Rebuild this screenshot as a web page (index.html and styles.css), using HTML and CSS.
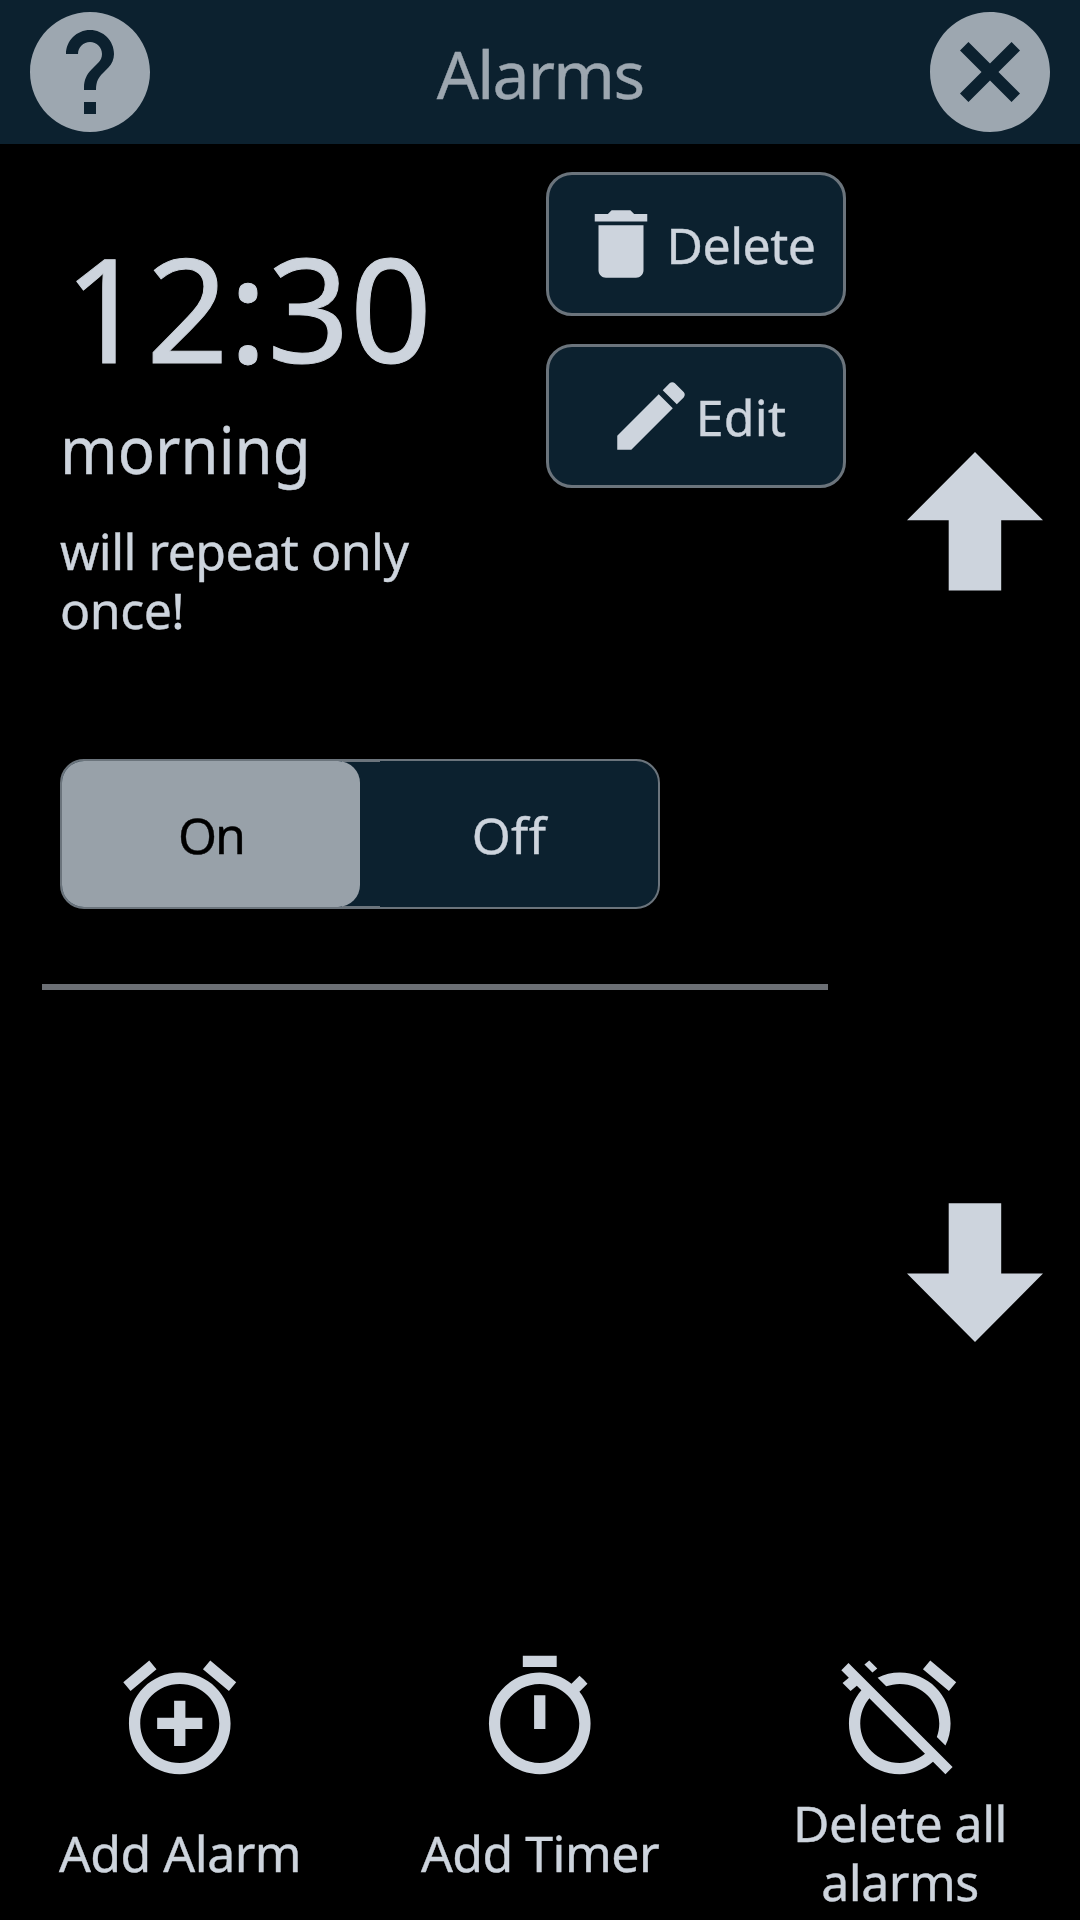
FILE: index.html
```html
<!DOCTYPE html>
<html lang="en">
<head>
<meta charset="utf-8">
<title>Alarms</title>
<link rel="stylesheet" href="styles.css">
</head>
<body>
<header class="header">
  <button class="round" aria-label="Help"><svg viewBox="0 0 24 24"><path d="M12 2C6.48 2 2 6.48 2 12s4.48 10 10 10 10-4.48 10-10S17.52 2 12 2zm1 17h-2v-2h2v2zm2.07-7.75l-.9.92C13.45 12.9 13 13.5 13 15h-2v-.5c0-1.1.45-2.1 1.17-2.83l1.24-1.26c.37-.36.59-.86.59-1.41 0-1.1-.9-2-2-2s-2 .9-2 2H8c0-2.21 1.79-4 4-4s4 1.79 4 4c0 .88-.36 1.68-.93 2.25z"/></svg></button>
  <h1 class="title">Alarms</h1>
  <button class="round" aria-label="Close"><svg viewBox="0 0 24 24"><path d="M12 2C6.47 2 2 6.47 2 12s4.47 10 10 10 10-4.47 10-10S17.53 2 12 2zm5 13.59L15.59 17 12 13.41 8.41 17 7 15.59 10.59 12 7 8.41 8.41 7 12 10.59 15.59 7 17 8.41 13.41 12 17 15.59z"/></svg></button>
</header>
<main class="main">
  <section class="list">
    <article class="alarm">
      <div class="top">
        <div class="info">
          <div class="time">12:30</div>
          <div class="name">morning</div>
          <div class="repeat">will repeat only once!</div>
        </div>
        <div class="actions">
          <button class="action"><svg viewBox="0 0 24 24"><path d="M6 19c0 1.100.9 2 2 2h8c1.100 0 2-.9 2-2V7H6v12zM19 4h-3.500l-1-1h-5l-1 1H5v2h14V4z"/></svg><span class="action-text">Delete</span></button>
          <button class="action"><svg viewBox="0 0 24 24"><path d="M3 17.250V21h3.750L17.810 9.940l-3.750-3.750L3 17.250zM20.710 7.040c.39-.39.39-1.020 0-1.410l-2.340-2.340c-.39-.39-1.020-.39-1.410 0l-1.830 1.830 3.750 3.750 1.830-1.830z"/></svg><span class="action-text wide">Edit</span></button>
        </div>
      </div>
      <div class="toggle">
        <button class="option selected">On</button>
        <button class="option">Off</button>
      </div>
    </article>
  </section>
  <nav class="scroller">
    <button class="scroll" aria-label="Up"><svg viewBox="0 0 136 139"><path d="M68 0L136 68.300H94.200V138.500H41.700V68.300H0z"/></svg></button>
    <button class="scroll" aria-label="Down"><svg viewBox="0 0 136 139"><path d="M41.700 .3H94.200V70.500H136L68 139 0 70.500H41.700z"/></svg></button>
  </nav>
</main>
<footer class="footer">
  <button class="tool"><svg viewBox="0 0 24 24"><path d="M7.880 3.390L6.600 1.860 2 5.710l1.290 1.530 4.590-3.850zM22 5.720l-4.600-3.860-1.290 1.530 4.600 3.860L22 5.720zM12 4c-4.970 0-9 4.030-9 9s4.020 9 9 9c4.970 0 9-4.030 9-9s-4.030-9-9-9zm0 16c-3.870 0-7-3.130-7-7s3.130-7 7-7 7 3.130 7 7-3.130 7-7 7zm1-11h-2v3H8v2h3v3h2v-3h3v-2h-3V9z"/></svg><span class="label"><span>Add Alarm</span></span></button>
  <button class="tool"><svg viewBox="0 0 24 24"><path d="M15 1H9v2h6V1zm-4 13h2V8h-2v6zm8.030-6.610l1.420-1.420c-.43-.51-.9-.99-1.410-1.410l-1.420 1.420C16.070 4.740 14.120 4 12 4c-4.970 0-9 4.030-9 9s4.020 9 9 9 9-4.030 9-9c0-2.120-.74-4.070-1.970-5.610zM12 20c-3.870 0-7-3.130-7-7s3.130-7 7-7 7 3.130 7 7-3.130 7-7 7z"/></svg><span class="label"><span>Add Timer</span></span></button>
  <button class="tool"><svg viewBox="0 0 24 24"><path d="M12 6c3.870 0 7 3.130 7 7 0 .84-.16 1.650-.43 2.400l1.520 1.520c.58-1.190.91-2.510.91-3.920 0-4.970-4.030-9-9-9-1.410 0-2.730.33-3.920.91L9.600 6.430C10.350 6.160 11.160 6 12 6zm10-.28l-4.600-3.860-1.290 1.530 4.600 3.860L22 5.720zM2.920 2.290L1.650 3.570 2.980 4.900l-1.110.93 1.420 1.420 1.110-.94.8.8C3.830 8.690 3 10.750 3 13c0 4.970 4.020 9 9 9 2.250 0 4.310-.83 5.890-2.200l2.200 2.200 1.270-1.270L3.890 3.270l-.97-.98zm13.550 16.100C15.260 19.390 13.700 20 12 20c-3.870 0-7-3.130-7-7 0-1.700.61-3.260 1.610-4.470l9.860 9.860zM8.020 3.280L6.600 1.860l-.86.71 1.420 1.420.86-.71z"/></svg><span class="label"><span>Delete all<br>alarms</span></span></button>
</footer>
</body>
</html>
```
FILE: styles.css
```css
* { box-sizing: border-box; }
body {
  margin: 0;
  width: 1080px;
  height: 1920px;
  display: flex;
  flex-direction: column;
  background: #000;
  color: #cdd4dd;
  font: 50px/59px "Noto Sans", sans-serif;
  letter-spacing: -0.5px;
  -webkit-text-stroke: 0.4px currentColor;
}
button {
  margin: 0;
  padding: 0;
  border: 0;
  background: none;
  color: inherit;
  font: inherit;
  letter-spacing: inherit;
}
svg { display: block; fill: currentColor; }

.header {
  flex: none;
  height: 144px;
  padding: 0 18px;
  display: flex;
  align-items: center;
  justify-content: space-between;
  background: #0c212f;
  color: #9da7b0;
}
.round svg { width: 144px; height: 144px; }
.title {
  margin: 0;
  padding-top: 2px;
  font-size: 66px;
  font-weight: 400;
  line-height: 78px;
  letter-spacing: -1.7px;
}

.main { flex: 1; display: flex; min-height: 0; }
.list { width: 870px; padding: 28px 0 0 42px; }
.alarm {
  width: 786px;
  height: 818px;
  border-bottom: 6px solid #6b6f74;
}
.top {
  height: 587px;
  padding-left: 18px;
  display: flex;
  justify-content: space-between;
}
.info { width: 400px; padding-top: 50px; }
.time {
  padding-left: 4px;
  font-size: 144px;
  line-height: 170px;
  letter-spacing: 0;
  -webkit-text-stroke: 1px currentColor;
}
.name {
  margin-top: 17px;
  font-size: 66px;
  line-height: 78px;
  letter-spacing: 0;
  transform: scaleX(0.935);
  transform-origin: left;
}
.repeat { margin-top: 35px; }
.actions {
  display: flex;
  flex-direction: column;
  gap: 28px;
  margin-right: -18px;
}
.action {
  width: 300px;
  height: 144px;
  display: flex;
  align-items: center;
  justify-content: center;
  border: 3px solid #6b747c;
  border-radius: 26px;
  background: #0c212f;
}
.action svg { width: 90px; height: 90px; }
.action-text { padding-top: 2px; }
.action-text.wide { letter-spacing: 0.3px; }
.toggle {
  width: 600px;
  height: 150px;
  margin-left: 18px;
  display: flex;
  border: 2px solid #6b747c;
  border-radius: 24px;
  background:
    linear-gradient(#6b747c, #6b747c) 280px 0 / 38px 1px no-repeat,
    linear-gradient(#6b747c, #6b747c) 280px 100% / 38px 1px no-repeat,
    #0c212f;
}
.option {
  flex: 1;
  padding-top: 2px;
  border-radius: 22px;
  letter-spacing: 0.4px;
}
.selected { background: #98a1a9; color: #000; letter-spacing: -2px; }

.scroller {
  width: 210px;
  padding: 308px 37px 0 0;
  display: flex;
  flex-direction: column;
  align-items: flex-end;
  gap: 612px;
}
.scroll svg { width: 136px; height: 139px; }

.footer { flex: none; height: 270.500px; display: flex; }
.tool {
  flex: 1;
  display: flex;
  flex-direction: column;
  align-items: center;
}
.tool svg { flex: none; width: 135.500px; height: 135.500px; }
.label { flex: 1; display: flex; align-items: center; padding-top: 1px; }
```
